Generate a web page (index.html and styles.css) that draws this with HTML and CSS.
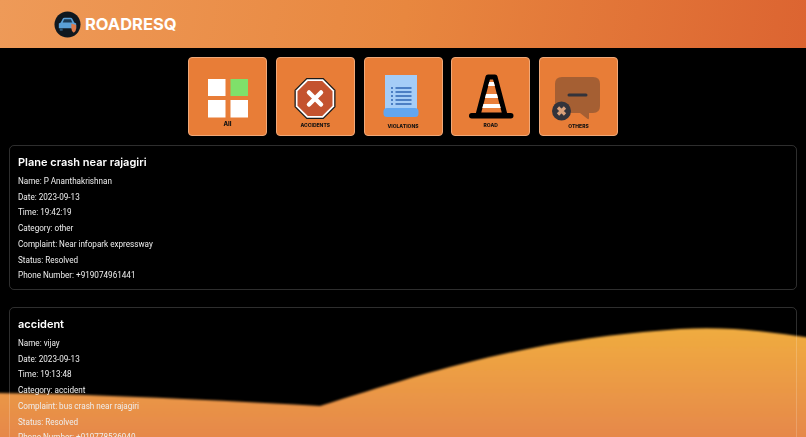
FILE: index.html
```html
<!DOCTYPE html>
<html lang="en">

<head>
  <meta charset="UTF-8">
  <meta name="viewport" content="width=device-width, initial-scale=1.0">
  <title>RoadResQ</title>
  <link rel="stylesheet" href="styles.css">
</head>

<body>
  <!-- Wave behind the content -->
  <svg class="wave" viewBox="0 0 806 437" preserveAspectRatio="none">
    <defs>
      <linearGradient id="waveFill" x1="0" y1="0" x2="0" y2="1">
        <stop offset="0" stop-color="#f0ac40"></stop>
        <stop offset="0.985" stop-color="#e5864a"></stop>
        <stop offset="1" stop-color="#a8642c"></stop>
      </linearGradient>
      <filter id="waveBlur" y="-5%" height="105%">
        <feGaussianBlur stdDeviation="1.200"></feGaussianBlur>
      </filter>
    </defs>
    <path d="M-5 393 C80 394 180 398 320 406 C420 375 520 340 680 329 C730 326 770 332 811 338 V445 H-5 Z" fill="url(#waveFill)" filter="url(#waveBlur)"></path>
  </svg>

  <header class="top-bar">
    <svg class="logo" viewBox="0 0 28 28">
      <circle cx="14" cy="14" r="13.500" fill="#10181f"></circle>
      <path d="M7 12 L9 8 Q9.500 7 11 7 H17 Q18.500 7 19 8 L21 12 L23 13 V18 H5 V13 Z" fill="#5a9fd6"></path>
      <path d="M9 12 L10.500 8.500 H17.500 L19 12 Z" fill="#1b3a55"></path>
      <rect x="6" y="18" width="3" height="2.500" fill="#2c5676"></rect>
      <rect x="19" y="18" width="3" height="2.500" fill="#2c5676"></rect>
      <path d="M18 13 L23 14.500 V18 Q23 21 20.500 22.500 Q18 21 18 18 Z" fill="#dd7a4a"></path>
    </svg>
    <span class="brand">ROADRESQ</span>
  </header>

  <nav class="categories">
    <a class="cat-tile">
      <svg class="cat-icon" viewBox="0 0 60 56">
        <rect x="10" y="6" width="17.500" height="17" fill="#fff"></rect>
        <rect x="32.500" y="6" width="17.500" height="17" fill="#7fe06a"></rect>
        <rect x="10" y="27" width="17.500" height="17.500" fill="#fff"></rect>
        <rect x="32.500" y="27" width="17.500" height="17.500" fill="#fff"></rect>
      </svg>
      <span class="cat-label cat-label-all">All</span>
    </a>
    <a class="cat-tile">
      <svg class="cat-icon" viewBox="0 0 60 56">
        <path d="M21.500 5 H38.500 L50.500 17 V34 L38.500 46 H21.500 L9.500 34 V17 Z" fill="#1a1a1a"></path>
        <path d="M22 6.300 H38 L49.200 17.500 V33.500 L38 44.700 H22 L10.800 33.500 V17.500 Z" fill="#fff"></path>
        <path d="M22.800 8 H37.200 L47.500 18.300 V32.700 L37.200 43 H22.800 L12.500 32.700 V18.300 Z" fill="#c4532f"></path>
        <path d="M24 19.500 L36 31.500 M36 19.500 L24 31.500" stroke="#fff" stroke-width="4.500" stroke-linecap="round"></path>
      </svg>
      <span class="cat-label">ACCIDENTS</span>
    </a>
    <a class="cat-tile">
      <svg class="cat-icon" viewBox="0 0 60 56">
        <rect x="12" y="2" width="32" height="36" fill="#a5cdf7"></rect>
        <path d="M18 15 H20 M22.500 15 H38.500 M18 19 H20 M22.500 19 H38.500 M18 23 H20 M22.500 23 H38.500 M18 27 H20 M22.500 27 H38.500 M18 31 H20 M22.500 31 H38.500" stroke="#4c7fc4" stroke-width="2"></path>
        <rect x="10.500" y="35" width="35" height="9" rx="3.500" fill="#62a6ef"></rect>
      </svg>
      <span class="cat-label cat-label-low">VIOLATIONS</span>
    </a>
    <a class="cat-tile">
      <svg class="cat-icon" viewBox="0 0 60 56">
        <path d="M27 4 H34 L44 42 H17 Z" fill="#ea7f3a" stroke="#000" stroke-width="5" stroke-linejoin="round"></path>
        <path d="M28.200 9 H32.800 L33.900 13 H27.100 Z M25 21 H36 L37 25 H24 Z M22.400 31 H38.600 L39.700 35 H21.300 Z" fill="#fff"></path>
        <rect x="8" y="40" width="44.500" height="5.500" rx="2.700" fill="#000"></rect>
      </svg>
      <span class="cat-label">ROAD</span>
    </a>
    <a class="cat-tile">
      <svg class="cat-icon" viewBox="0 0 60 56">
        <path d="M13 4 H44 Q51 4 51 11 V33 Q51 40 44 40 H40 V45 Q40 47 38 45.500 L31 40 H13 Q6 40 6 33 V11 Q6 4 13 4 Z" fill="#a55f33"></path>
        <rect x="18.500" y="20.500" width="20" height="3" rx="1.500" fill="#33333b"></rect>
        <circle cx="12.500" cy="38" r="9.500" fill="#33333b"></circle>
        <path d="M9 34.500 L16 41.500 M16 34.500 L9 41.500" stroke="#d9a07a" stroke-width="3.200"></path>
      </svg>
      <span class="cat-label cat-label-low">OTHERS</span>
    </a>
  </nav>

  <main class="reports">
    <section class="report-card">
      <h3>Plane crash near rajagiri</h3>
      <p>Name: P Ananthakrishnan</p>
      <p>Date: 2023-09-13</p>
      <p>Time: 19:42:19</p>
      <p>Category: other</p>
      <p>Complaint: Near infopark expressway</p>
      <p>Status: Resolved</p>
      <p>Phone Number: +919074961441</p>
    </section>

    <section class="report-card">
      <h3>accident</h3>
      <p>Name: vijay</p>
      <p>Date: 2023-09-13</p>
      <p>Time: 19:13:48</p>
      <p>Category: accident</p>
      <p>Complaint: bus crash near rajagiri</p>
      <p>Status: Resolved</p>
      <p>Phone Number: +919778536940</p>
    </section>
  </main>
</body>

</html>
```

FILE: styles.css
```css
body {
  margin: 0;
  height: 437px;
  overflow: hidden;
  background-color: #000;
  color: #fff;
  font-family: Inter, 'Liberation Sans', Arial, sans-serif;
}

.wave {
  position: fixed;
  left: 0;
  top: 0;
  width: 806px;
  height: 437px;
}

.top-bar {
  position: relative;
  display: flex;
  align-items: center;
  gap: 4px;
  height: 48px;
  padding-left: 54px;
  background: linear-gradient(100deg, #ee9a58 0%, #e8873f 50%, #dc6431 100%);
}

.logo {
  width: 27px;
  height: 27px;
}

.brand {
  font-size: 16.500px;
  font-weight: 700;
  color: #fff;
}

.categories {
  position: relative;
  display: flex;
  justify-content: center;
  gap: 8.750px;
  margin-top: 9px;
}

.cat-tile {
  display: flex;
  flex-direction: column;
  align-items: center;
  box-sizing: border-box;
  width: 79px;
  height: 79px;
  padding-top: 15px;
  border-radius: 4px;
  background-color: #e87d37;
  border: 1px solid #f0a878;
}

.cat-icon {
  width: 60px;
  height: 56px;
  flex-shrink: 0;
}

.cat-label {
  margin-top: -7px;
  font-size: 5px;
  line-height: 7px;
  font-weight: 800;
  color: #111;
}

.cat-label-low {
  margin-top: -6px;
}

.cat-label-all {
  margin-top: -9px;
  font-size: 6px;
}

.reports {
  position: relative;
  margin: 9px 9px 0;
}

.report-card {
  box-sizing: border-box;
  height: 145px;
  margin-bottom: 17px;
  padding: 9px 8px 0;
  border: 1px solid rgba(255, 255, 255, 0.18);
  border-radius: 5px;
}

.report-card h3 {
  margin: 0 0 4px;
  font-size: 11px;
  line-height: 15px;
  font-weight: 600;
}

.report-card p {
  margin: 0;
  font-family: Roboto, 'Liberation Sans', Arial, sans-serif;
  font-size: 8.150px;
  line-height: 15.700px;
  color: #eee;
}
```
